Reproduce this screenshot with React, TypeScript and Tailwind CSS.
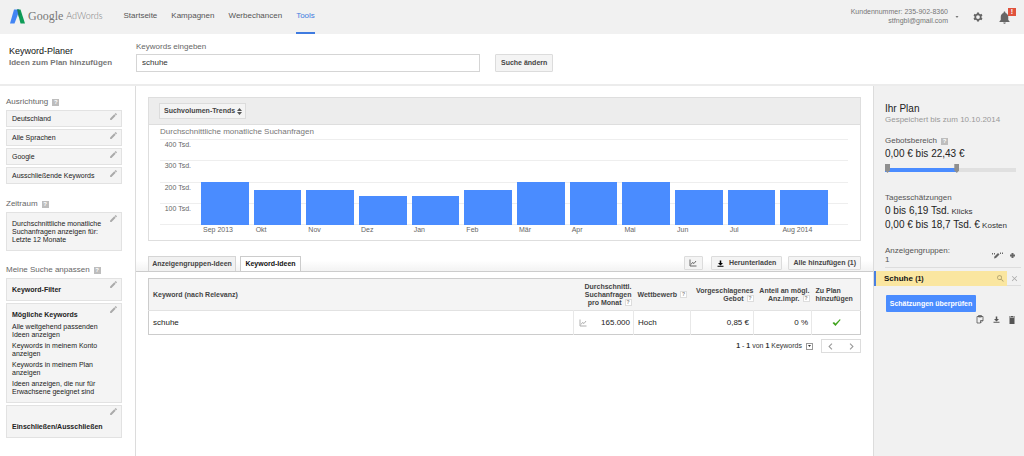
import type { ReactNode } from "react";
import {
  MdChevronLeft,
  MdChevronRight,
  MdClose,
  MdEdit,
  MdNotifications,
  MdSearch,
} from "react-icons/md";

const navItems = ["Startseite", "Kampagnen", "Werbechancen", "Tools"];

const targeting = ["Deutschland", "Alle Sprachen", "Google", "Ausschließende Keywords"];

const keywordOptions = [
  "Alle weitgehend passenden Ideen anzeigen",
  "Keywords in meinem Konto anzeigen",
  "Keywords in meinem Plan anzeigen",
  "Ideen anzeigen, die nur für Erwachsene geeignet sind",
];

// monthly searches in thousands
const MAX_VOLUME = 400;
const months = [
  { label: "Sep 2013", volume: 201 },
  { label: "Okt", volume: 165 },
  { label: "Nov", volume: 165 },
  { label: "Dez", volume: 135 },
  { label: "Jan", volume: 135 },
  { label: "Feb", volume: 165 },
  { label: "Mär", volume: 201 },
  { label: "Apr", volume: 201 },
  { label: "Mai", volume: 201 },
  { label: "Jun", volume: 165 },
  { label: "Jul", volume: 165 },
  { label: "Aug 2014", volume: 165 },
];

const gridLabels = ["400 Tsd.", "300 Tsd.", "200 Tsd.", "100 Tsd."];

const buttonClass =
  "flex items-center justify-center whitespace-nowrap rounded-[1px] border border-[#dcdcdc] bg-[#f4f4f4] text-[7px] font-bold text-[#444]";

function Help() {
  return (
    <button
      type="button"
      aria-label="Hilfe"
      className="flex size-[7px] items-center justify-center bg-[#bdbdbd] text-[6px] leading-none font-bold text-white"
    >
      ?
    </button>
  );
}

function HeadHelp() {
  return (
    <button
      type="button"
      aria-label="Hilfe"
      className="ml-[3px] inline-flex size-[7px] items-center justify-center border border-[#ddd] bg-white align-top text-[5px] leading-none text-[#888]"
    >
      ?
    </button>
  );
}

function TrendIcon({ className }: { className: string }) {
  return (
    <svg viewBox="0 0 16 16" fill="none" stroke="currentColor" className={className}>
      <path d="M2 1v13h13" strokeWidth="1.6" />
      <path d="M4 11l3-4 3 2 4-5" strokeWidth="1.6" />
    </svg>
  );
}

function DownloadIcon({ className }: { className: string }) {
  return (
    <svg viewBox="0 0 14 14" fill="currentColor" className={className}>
      <path d="M5.5 1h3v5H12l-5 5-5-5h3.500z" />
      <path d="M1 11.500h12V13.500H1z" />
    </svg>
  );
}

function GearIcon({ className }: { className: string }) {
  return (
    <svg viewBox="0 0 24 24" fill="none" stroke="currentColor" className={className}>
      <circle cx="12" cy="12" r="6.5" strokeWidth="4" />
      {/* six teeth around the rim */}
      <g strokeWidth="5">
        <path d="M12 1v4M12 19v4" />
        <path d="M12 1v4M12 19v4" transform="rotate(60 12 12)" />
        <path d="M12 1v4M12 19v4" transform="rotate(120 12 12)" />
      </g>
    </svg>
  );
}

function Card({ children, tall = false }: { children: ReactNode; tall?: boolean }) {
  return (
    <div className="relative border border-[#e2e2e2] bg-[#f4f4f4] px-[5px] text-[7px] leading-[8px] text-[#222]">
      <div className={tall ? "pt-[7px] pb-[6px]" : "pt-[4px] pb-[3px]"}>{children}</div>
      <button type="button" aria-label="Bearbeiten" className="absolute top-px right-[3px] text-[#aaa]">
        <MdEdit className="size-[9px]" />
      </button>
    </div>
  );
}

function SectionTitle({ children }: { children: ReactNode }) {
  return (
    <h2 className="flex items-center gap-[4px] pb-[3px] text-[8px] leading-[10px] text-[#666]">
      {children}
      <Help />
    </h2>
  );
}

function Header() {
  return (
    <header className="flex h-[34px] items-stretch bg-[#f1f1f1] pr-[12px] pl-[10px]">
      <a href="#start" className="flex items-center pb-[2px]">
        <svg viewBox="0 0 30 30" className="size-[15px]">
          <path d="M14 1h7l9 28h-9z" fill="#0f9d58" />
          <path d="M8 1h9l1 4-9 24H0z" fill="#4285f4" />
          <path d="M14 1h4l3 10-3 6z" fill="#1b7a5a" />
        </svg>
        <span className="ml-[3px] font-['Liberation_Serif',serif] text-[12px] leading-[14px] text-[#777]">
          Google
        </span>
        <span className="ml-[3px] font-['Lato',sans-serif] text-[9px] leading-[12px] font-light text-[#777]">
          AdWords
        </span>
      </a>
      <nav className="ml-[21px] flex gap-[14px] text-[8px]">
        {navItems.map((item) => (
          <a
            key={item}
            href={`#${item.toLowerCase()}`}
            className={
              item === "Tools"
                ? "flex items-center border-b-2 border-[#3f7be0] text-[#3f7be0]"
                : "flex items-center border-b-2 border-transparent text-[#555]"
            }
          >
            {item}
          </a>
        ))}
      </nav>
      <div className="ml-auto flex items-center">
        <p className="pb-[3px] text-right text-[7px] leading-[9px] text-[#777]">
          Kundennummer: 235-902-8360
          <br />
          stfngbl@gmail.com
        </p>
        <button type="button" aria-label="Konto wechseln" className="ml-[7px] text-[#777]">
          <svg viewBox="0 0 6 4" className="h-[2px] w-[4px]">
            <path d="M0 0h6L3 4z" fill="currentColor" />
          </svg>
        </button>
        <button type="button" aria-label="Einstellungen" className="ml-[14px] text-[#666]">
          <GearIcon className="size-[10px]" />
        </button>
        <button type="button" aria-label="Benachrichtigungen" className="relative ml-[14px] text-[#666]">
          <MdNotifications className="size-[15px]" />
          <span className="absolute -top-[2px] -right-[4px] flex size-[8px] items-center justify-center bg-[#e0533d] text-[7px] leading-none font-bold text-white">
            !
          </span>
        </button>
      </div>
    </header>
  );
}

function SearchBar() {
  return (
    <div className="flex h-[52px] border-b-2 border-[#ececec] pl-[9px]">
      <div className="w-[127px] pt-[11px]">
        <h1 className="text-[9px] leading-[12px] text-[#111]">Keyword-Planer</h1>
        <p className="text-[8px] leading-[12px] font-bold text-[#777]">Ideen zum Plan hinzufügen</p>
      </div>
      <form className="flex flex-1 items-end pb-[12px]">
        <div className="w-[344px]">
          <label htmlFor="keywords" className="block pb-[2px] text-[8px] leading-[10px] text-[#666]">
            Keywords eingeben
          </label>
          <input
            id="keywords"
            type="text"
            defaultValue="schuhe"
            className="block h-[18px] w-full border border-[#d5d5d5] bg-white px-[5px] pb-[2px] text-[8px] text-[#333] outline-none"
          />
        </div>
        <button type="button" className={`${buttonClass} ml-[15px] h-[18px] px-[5px]`}>
          Suche ändern
        </button>
      </form>
    </div>
  );
}

function Sidebar() {
  return (
    <aside className="flex w-[136px] shrink-0 flex-col border-r border-[#dcdcdc] pt-[11px] pr-[13px] pb-[18px] pl-[6px]">
      <SectionTitle>Ausrichtung</SectionTitle>
      <div className="flex flex-col gap-[2px]">
        {targeting.map((item) => (
          <Card key={item}>{item}</Card>
        ))}
      </div>
      <div className="mt-[15px]">
        <SectionTitle>Zeitraum</SectionTitle>
        <Card tall>
          Durchschnittliche monatliche
          <br />
          Suchanfragen anzeigen für:
          <br />
          Letzte 12 Monate
        </Card>
      </div>
      <div className="mt-[14px]">
        <SectionTitle>Meine Suche anpassen</SectionTitle>
        <div className="flex flex-col gap-[2px]">
          <Card tall>
            <h3 className="font-bold">Keyword-Filter</h3>
          </Card>
          <Card tall>
            <h3 className="pb-[4px] font-bold">Mögliche Keywords</h3>
            <ul className="flex flex-col gap-[3px] pr-[8px]">
              {keywordOptions.map((option) => (
                <li key={option}>{option}</li>
              ))}
            </ul>
          </Card>
          <Card tall>
            <h3 className="pt-[10px] font-bold">Einschließen/Ausschließen</h3>
          </Card>
        </div>
      </div>
    </aside>
  );
}

function TrendChart() {
  return (
    <section className="mx-[12px] border border-[#dedede]">
      <div className="flex h-[27px] items-center border-b border-[#dedede] bg-[#ededed] pl-[10px]">
        <div className="relative">
          <select
            aria-label="Diagramm"
            className="block h-[16px] w-[87px] appearance-none border border-[#dcdcdc] bg-[#f4f4f4] pl-[4px] text-[7px] font-bold text-[#444]"
          >
            <option>Suchvolumen-Trends</option>
          </select>
          <svg viewBox="0 0 10 14" className="pointer-events-none absolute top-[5px] right-[4px] h-[7px] w-[5px]">
            <path d="M5 0l5 6H0zM5 14l5-6H0z" fill="#555" />
          </svg>
        </div>
      </div>
      <div className="pt-[2px] pr-[12px] pb-[6px] pl-[11px]">
        <h2 className="pb-[2px] text-[8px] leading-[10px] text-[#777]">
          Durchschnittliche monatliche Suchanfragen
        </h2>
        <div className="grid h-[86px]">
          <div className="col-start-1 row-start-1 flex flex-col border-b border-[#eee]">
            {gridLabels.map((label) => (
              <div key={label} className="flex-1 border-t border-[#eee] pt-[1px] text-[7px] leading-[8px] text-[#666]">
                <span className="block w-[31px] text-right">{label}</span>
              </div>
            ))}
          </div>
          <div className="col-start-1 row-start-1 mr-[20px] ml-[41px] flex items-end gap-[5px]">
            {months.map((month) => (
              <div
                key={month.label}
                className="flex-1 bg-[#4a8cff]"
                style={{ height: `${(month.volume / MAX_VOLUME) * 100}%` }}
              />
            ))}
          </div>
        </div>
        <div className="mr-[20px] ml-[41px] flex gap-[5px] text-[7px] leading-[9px] text-[#666]">
          {months.map((month) => (
            <span key={month.label} className="w-0 flex-1 pl-[2px] whitespace-nowrap">
              {month.label}
            </span>
          ))}
        </div>
      </div>
    </section>
  );
}

function TabBar() {
  return (
    <div className="mt-[15px] flex h-[16px] border-b border-[#ccc] bg-linear-to-b from-white from-30% to-[#f3f3f3] px-[12px] text-[7px] font-bold">
      <div role="tablist" className="flex gap-[4px]">
        <button
          type="button"
          role="tab"
          aria-selected="false"
          className="w-[88px] border border-b-0 border-[#d5d5d5] bg-[#f1f1f1] whitespace-nowrap text-[#444]"
        >
          Anzeigengruppen-Ideen
        </button>
        <button
          type="button"
          role="tab"
          aria-selected="true"
          className="w-[61px] border border-b-0 border-[#ccc] bg-white whitespace-nowrap text-[#111]"
        >
          Keyword-Ideen
        </button>
      </div>
      <div className="ml-auto flex h-[14px]">
        <button type="button" aria-label="Diagramm anzeigen" className={`${buttonClass} w-[19px]`}>
          <TrendIcon className="size-[8px]" />
        </button>
        <button type="button" className={`${buttonClass} ml-[8px] gap-[5px] px-[5px]`}>
          <DownloadIcon className="size-[7px] text-black" />
          Herunterladen
        </button>
        <button type="button" className={`${buttonClass} ml-[6px] px-[4px]`}>
          Alle hinzufügen (1)
        </button>
      </div>
    </div>
  );
}

function KeywordTable() {
  return (
    <div className="mx-[12px] mt-[6px]">
      <table className="w-full table-fixed border border-[#ccc] text-[#222]">
        <colgroup>
          <col />
          <col className="w-[60px]" />
          <col className="w-[57px]" />
          <col className="w-[63px]" />
          <col className="w-[58px]" />
          <col className="w-[49px]" />
        </colgroup>
        <thead>
          <tr className="h-[32px] border-b border-[#e2e2e2] bg-[#f4f4f4] text-[7px] leading-[8px] whitespace-nowrap text-[#444]">
            <th className="pl-[4px] text-left">Keyword (nach Relevanz)</th>
            <th className="pr-[2px] text-right">
              Durchschnittl.
              <br />
              Suchanfragen
              <br />
              pro Monat
              <HeadHelp />
            </th>
            <th className="pl-[4px] text-left">
              Wettbewerb
              <HeadHelp />
            </th>
            <th className="text-right">
              Vorgeschlagenes
              <br />
              Gebot
              <HeadHelp />
            </th>
            <th className="pr-[2px] text-right">
              Anteil an mögl.
              <br />
              Anz.impr.
              <HeadHelp />
            </th>
            <th className="pl-[4px] text-left">
              Zu Plan
              <br />
              hinzufügen
            </th>
          </tr>
        </thead>
        <tbody>
          <tr className="h-[24px] text-[8px] leading-[10px]">
            <td className="pl-[4px]">schuhe</td>
            <td className="border-l border-[#e8e8e8] px-[3px]">
              <span className="flex items-center justify-between pl-[2px]">
                <TrendIcon className="size-[8px] text-[#999]" />
                165.000
              </span>
            </td>
            <td className="border-l border-[#e8e8e8] pl-[4px]">Hoch</td>
            <td className="border-l border-[#e8e8e8] pr-[4px] text-right">0,85 €</td>
            <td className="border-l border-[#e8e8e8] pr-[3px] text-right">0 %</td>
            <td className="border-l border-[#e8e8e8]">
              <svg viewBox="0 0 18 14" role="img" aria-label="Im Plan" className="mx-auto h-[7px] w-[9px]">
                <path d="M1 8l3-2 3 3L16 0l1 2L7 14z" fill="#3fa31c" />
              </svg>
            </td>
          </tr>
        </tbody>
      </table>
      <div className="mt-[4px] flex items-center justify-end text-[7px] text-[#333]">
        <p>
          <b>1</b> - <b>1</b> von <b>1</b> Keywords
        </p>
        <button
          type="button"
          aria-label="Zeilen anzeigen"
          className="ml-[4px] flex size-[7px] items-center justify-center border border-[#999]"
        >
          <svg viewBox="0 0 6 4" className="h-[2px] w-[3px]">
            <path d="M0 0h6L3 4z" fill="#333" />
          </svg>
        </button>
        <div className="ml-[8px] flex h-[14px] w-[40px] items-center justify-between border border-[#ddd] px-[2px] text-[#999]">
          <button type="button" aria-label="Zurück">
            <MdChevronLeft className="size-[13px]" />
          </button>
          <button type="button" aria-label="Weiter">
            <MdChevronRight className="size-[13px]" />
          </button>
        </div>
      </div>
    </div>
  );
}

const rangeClass =
  "pointer-events-none absolute inset-0 h-[9px] w-full appearance-none bg-transparent [&::-webkit-slider-thumb]:pointer-events-auto [&::-webkit-slider-thumb]:h-[9px] [&::-webkit-slider-thumb]:w-[5px] [&::-webkit-slider-thumb]:appearance-none [&::-webkit-slider-thumb]:bg-[#8f8f8f] [&::-webkit-slider-thumb]:[clip-path:polygon(0_0,100%_0,100%_70%,50%_100%,0_70%)]";

function PlanPanel() {
  return (
    <aside className="w-[151px] shrink-0 border-l border-[#dcdcdc] bg-[#f1f1f1] pt-[17px] text-[8px] leading-[10px] text-[#555]">
      <div className="pr-[8px] pl-[11px]">
        <h2 className="text-[10px] leading-[12px] text-[#222]">Ihr Plan</h2>
        <p className="text-[#999]">Gespeichert bis zum 10.10.2014</p>

        <h3 className="mt-[11px] flex items-center gap-[4px]">
          Gebotsbereich
          <Help />
        </h3>
        <p className="mt-[1px] text-[10px] leading-[14px] text-[#222]">0,00 € bis 22,43 €</p>
        <div className="relative mt-[3px] h-[9px] pt-[4px]">
          <div className="h-[4px] bg-[#e0e0e0]">
            <div className="h-full w-[55%] bg-[#4a8cff]" />
          </div>
          <input type="range" aria-label="Niedrigstes Gebot" min={0} max={100} defaultValue={0} className={rangeClass} />
          <input type="range" aria-label="Höchstes Gebot" min={0} max={100} defaultValue={55} className={rangeClass} />
        </div>

        <h3 className="mt-[20px]">Tagesschätzungen</h3>
        <p className="mt-[1px] text-[#333]">
          <span className="text-[10px] leading-[14px] text-[#222]">0 bis 6,19 Tsd.</span> Klicks
        </p>
        <p className="text-[#333]">
          <span className="text-[10px] leading-[14px] text-[#222]">0,00 € bis 18,7 Tsd. €</span> Kosten
        </p>
      </div>

      <div className="mt-[14px] mr-[3px] ml-[11px] flex items-center border-b border-[#ddd] pb-[3px]">
        <p className="leading-[9px]">
          Anzeigengruppen:
          <br />1
        </p>
        <button type="button" aria-label="Umbenennen" className="ml-auto text-[#666]">
          <svg viewBox="0 0 22 14" fill="currentColor" className="h-[7px] w-[11px]">
            <path d="M0 2h2v3H0zM4 2h2v3H4zM16 1h2v3h-2zM20 1h2v3h-2z" />
            <path d="M4 13l1-4 7-7 3 3-7 7z" />
          </svg>
        </button>
        <button type="button" aria-label="Anzeigengruppe hinzufügen" className="mr-[6px] ml-[7px] text-[#666]">
          <svg viewBox="0 0 10 10" className="size-[5px]">
            <path d="M3 0h4v3h3v4H7v3H3V7H0V3h3z" fill="currentColor" />
          </svg>
        </button>
      </div>
      <div className="mt-[3px] flex h-[15px] items-stretch">
        <div className="flex flex-1 items-center border-l-2 border-[#4a7fe0] bg-[#fae6a0] pr-[2px] pl-[8px]">
          <a href="#schuhe" className="font-bold text-[#111]">
            Schuhe <span className="text-[7px]">(1)</span>
          </a>
          <button type="button" aria-label="Suchen" className="ml-auto text-[#a89a68]">
            <MdSearch className="size-[9px]" />
          </button>
        </div>
        <button type="button" aria-label="Entfernen" className="mr-[3px] w-[14px] border-b border-[#ddd] text-[#aaa]">
          <MdClose className="mx-auto size-[9px]" />
        </button>
      </div>
      <button
        type="button"
        className="mt-[9px] ml-[12px] flex h-[17px] w-[90px] items-center justify-center rounded-[1px] bg-[#4a8cff] text-[7px] font-bold whitespace-nowrap text-white"
      >
        Schätzungen überprüfen
      </button>
      <div className="mt-[3px] mr-[9px] flex items-center justify-end gap-[9px] text-[#555]">
        <button type="button" aria-label="Kopieren">
          <svg viewBox="0 0 16 18" fill="none" stroke="currentColor" strokeWidth="1.6" className="h-[9px] w-[8px]">
            <path d="M2 3h12v8l-5 5H2z" />
            <path d="M9 16v-5h5M5 1h6v3H5z" />
          </svg>
        </button>
        <button type="button" aria-label="Herunterladen">
          <DownloadIcon className="size-[7px]" />
        </button>
        <button type="button" aria-label="Löschen">
          <svg viewBox="0 0 12 16" fill="currentColor" className="h-[8px] w-[6px]">
            <path d="M0 1h4V0h4v1h4v2H0zM1 4h10v12H1z" />
          </svg>
        </button>
      </div>
    </aside>
  );
}

export default function App() {
  return (
    <div className="flex min-h-screen flex-col bg-white font-['Liberation_Sans',Arial,sans-serif]">
      <Header />
      <SearchBar />
      <div className="flex flex-1">
        <Sidebar />
        <main className="min-w-0 flex-1 pt-[11px]">
          <TrendChart />
          <TabBar />
          <KeywordTable />
        </main>
        <PlanPanel />
      </div>
    </div>
  );
}
